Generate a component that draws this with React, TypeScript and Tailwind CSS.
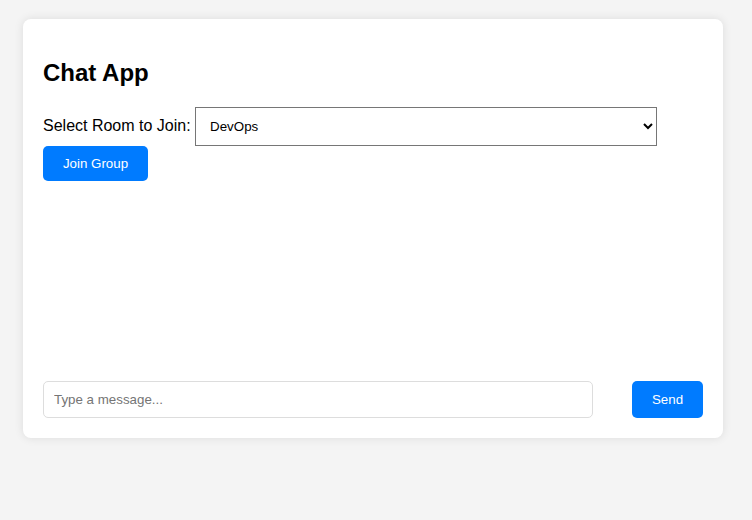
import { useState } from 'react'

const rooms = ['DevOps', 'Frontend', 'Backend', 'Design']

export default function App() {
  const [room, setRoom] = useState('DevOps')
  const [message, setMessage] = useState('')

  return (
    <div className="min-h-[520px] bg-[#f4f4f4] pl-[23px] pt-[19px] font-['Liberation_Sans',Arial,sans-serif] text-black">
      <div className="w-[700px] rounded-lg bg-white p-5 shadow-[0_0_10px_rgba(0,0,0,0.1)]">
        <h2 className="my-5 text-2xl leading-[28px] font-bold">Chat App</h2>

        <div className="text-base leading-[18px]">
          <label htmlFor="room">Select Room to Join:</label>{' '}
          <select
            id="room"
            value={room}
            onChange={(e) => setRoom(e.target.value)}
            className="inline-block h-[39px] w-[462px] appearance-auto rounded-none border border-[#767676] bg-white px-[10px] text-[13.333px]"
          >
            {rooms.map((r) => (
              <option key={r} value={r}>
                {r}
              </option>
            ))}
          </select>{' '}
          <button className="inline-block h-[35px] w-[105px] rounded-[5px] bg-[#007bff] text-[13.333px] text-white">
            Join Group
          </button>
        </div>

        <div className="h-[200px]" />

        <div className="flex items-center justify-between">
          <input
            value={message}
            onChange={(e) => setMessage(e.target.value)}
            placeholder="Type a message..."
            className="h-[37px] w-[550px] rounded-[5px] border border-[#ddd] px-[10px] text-[13.333px] outline-none placeholder:text-[#757575]"
          />
          <button className="h-[37px] w-[71px] rounded-[5px] bg-[#007bff] text-[13.333px] text-white">Send</button>
        </div>
      </div>
    </div>
  )
}
